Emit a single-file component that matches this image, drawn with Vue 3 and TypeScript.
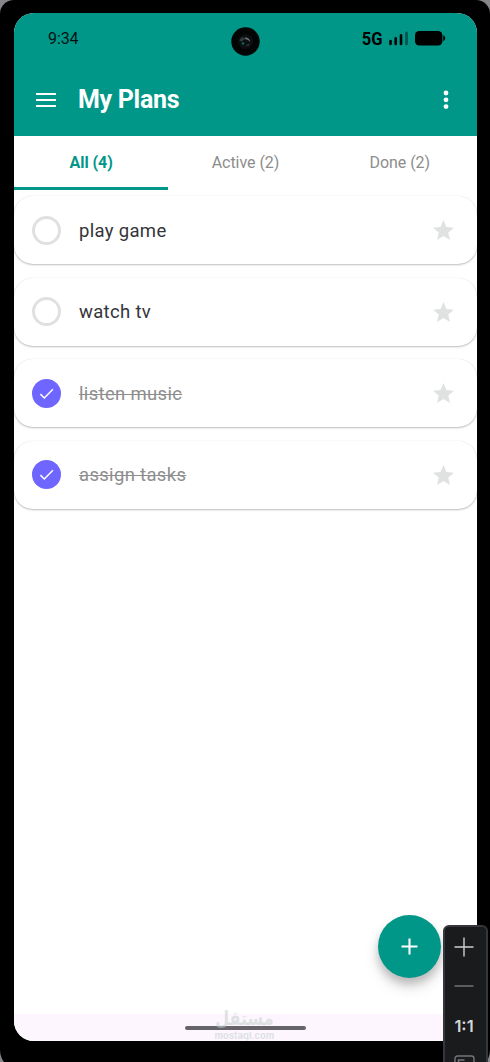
<script setup lang="ts">
interface Plan { title: string; done: boolean }
const plans: Plan[] = [
  { title: 'play game', done: false },
  { title: 'watch tv', done: false },
  { title: 'listen music', done: true },
  { title: 'assign tasks', done: true },
]
const tabs: string[] = ['All (4)', 'Active (2)', 'Done (2)']
</script>

<template>
  <div class="device">
    <div class="frame">
      <main class="screen">
        <header class="top">
          <div class="status">
            <span class="time">9:34</span>
            <div class="signals">
              <span class="net">5G</span>
              <svg class="bars" width="20" height="16" viewBox="0 0 20 16">
                <path d="M1.5 14V11M6.7 14V8.4M12 14V5.2" stroke="#000" stroke-width="2.6" stroke-linecap="round" />
                <path d="M17.5 14V3" stroke="#000" stroke-opacity=".42" stroke-width="2.8" stroke-linecap="round" />
              </svg>
              <svg class="battery" width="31" height="15" viewBox="0 0 31 15">
                <rect x="0" y="0" width="27.4" height="14.5" rx="4.3" />
                <path d="M28.2 4.2q2 .4 2 3t-2 3z" />
              </svg>
            </div>
          </div>
          <div class="bar">
            <svg class="menu" width="20" height="14" viewBox="0 0 20 14"><path d="M0 1h20M0 7h20M0 13h20" stroke="#fff" stroke-width="2" /></svg>
            <h1>My Plans</h1>
            <svg class="more" width="6" height="20" viewBox="0 0 6 20"><circle cx="3" cy="3" r="2.4" /><circle cx="3" cy="9.8" r="2.4" /><circle cx="3" cy="16.6" r="2.4" /></svg>
          </div>
        </header>
        <nav class="tabs">
          <div v-for="(tab, i) in tabs" :key="tab" class="tab" :class="{ active: i === 0 }">{{ tab }}</div>
        </nav>
        <section class="list">
          <article v-for="plan in plans" :key="plan.title" class="card" :class="{ done: plan.done }">
            <span class="check">
              <svg v-if="plan.done" width="29" height="29" viewBox="0 0 29 29"><path d="M8.4 15.1l3.9 3.9 8.6-8.7" fill="none" stroke="#fff" stroke-width="1.5" /></svg>
            </span>
            <span class="title">{{ plan.title }}</span>
            <svg class="star" width="21" height="20" viewBox="2 2 20 19"><path d="M12 17.27 18.18 21l-1.64-7.03L22 9.24l-7.19-.61L12 2 9.19 8.63 2 9.24l5.46 4.73L5.82 21z" /></svg>
          </article>
        </section>
        <footer class="navigation">
          <div class="home"></div>
        </footer>
      </main>
    </div>
    <svg class="camera" width="29" height="29" viewBox="0 0 29 29">
      <circle cx="14.5" cy="14.5" r="14.2" fill="#030505" />
      <circle cx="14.5" cy="14.5" r="7.5" fill="#0b0f10" />
      <path d="M8.5 13.5q.6-3 3.5-3.6l3 2.6q-3-.4-4.2 2.2z" fill="#343b3d" />
      <path d="M14 10.3q4.3.2 5.4 4.8-2-2.6-5-3z" fill="#6f7e81" />
      <path d="M14.5 18.5l4-2-1 2.8z" fill="#303638" />
      <circle cx="12" cy="16.5" r="1.2" fill="#067068" />
    </svg>
    <div class="watermark"><span class="brand" dir="rtl">مستقل</span><span class="site">mostaql.com</span></div>
    <button class="fab" aria-label="Add plan"><svg width="17" height="17" viewBox="0 0 17 17"><path d="M8.5 .5v16M.5 8.5h16" stroke="#fff" stroke-width="2.1" /></svg></button>
    <aside class="zoom">
      <svg class="plus" width="20" height="20" viewBox="0 0 20 20"><path d="M10 .5v19M.5 10h19" /></svg>
      <svg class="minus" width="20" height="2" viewBox="0 0 20 2"><path d="M.5 1h19" /></svg>
      <span class="ratio">1:1</span>
      <svg class="fit" width="21" height="16" viewBox="0 0 21 16"><rect x="1" y="1" width="19" height="18" rx="2.5" /><path d="M4.5 9V5h6" /></svg>
    </aside>
  </div>
</template>

<style>
body { background: #000; overflow: hidden; }
</style>

<style scoped>
.device { position: relative; width: 490px; height: 1062px; overflow: hidden; background: #85858a; font-family: Roboto, "Noto Sans", sans-serif; }
.frame { box-sizing: border-box; height: 1070px; padding: 13px 13px 29px 14px; background: #000; border-radius: 14px 14px 20px 20px; }
.screen { display: flex; flex-direction: column; width: 463px; height: 1028px; overflow: hidden; border-radius: 20px; background: #fff; }
.top { flex: 0 0 122.3px; background: #009788; }
.status { display: flex; justify-content: space-between; align-items: center; height: 50px; padding: 0 31px 0 34px; }
.time { font-size: 16px; letter-spacing: -.1px; color: #031311; }
.signals { display: flex; align-items: center; height: 16px; }
.net { padding-top: 1px; font-size: 18.8px; font-weight: 700; line-height: 16px; transform: scaleX(.88); transform-origin: right; }
.bars { margin-left: 6px; }
.battery { margin-left: 6px; }
.bar { display: flex; align-items: center; height: 73px; padding: 0 28.5px 0 22px; }
h1 { margin: 0 auto 0 22px; font-size: 25px; line-height: 30px; font-weight: 700; letter-spacing: -.3px; color: #fff; }
.more { fill: #fff; }
.tabs { display: grid; grid-template-columns: repeat(3, 1fr); flex: 0 0 53.7px; }
.tab { display: flex; align-items: center; justify-content: center; padding-top: 2.4px; border-bottom: 3.4px solid transparent; color: #8d8d8d; font-size: 16px; letter-spacing: -.05px; }
.active { color: #009788; border-color: #009788; font-weight: 700; }
.list { display: flex; flex-direction: column; gap: 13.5px; padding-top: 6.4px; }
.card { box-sizing: border-box; display: flex; align-items: center; height: 68px; padding: 0 23.4px 0 18px; border-radius: 19px; background: #fff; box-shadow: 0 1px 2px rgba(0,0,0,.25), 0 0 1px rgba(0,0,0,.12); }
.check { box-sizing: border-box; width: 29px; height: 29px; border: 3px solid #dfe1e1; border-radius: 50%; }
.done .check { border: 0; background: #6e66ff; }
.check svg { display: block; }
.title { margin: 0 auto 0 18px; padding-top: 1px; color: #343439; font-size: 18.5px; letter-spacing: .32px; }
.done .title { color: #8e8e8e; text-decoration: line-through; text-decoration-thickness: 1.3px; }
.star { fill: #dfe2e1; }
.navigation { display: flex; align-items: center; justify-content: center; height: 27px; margin-top: auto; background: #fdf6ff; }
.home { width: 121px; height: 4px; border-radius: 2px; background: #67636a; }
.camera { position: absolute; left: 231px; top: 27px; }
.watermark { position: absolute; left: 210px; top: 1012px; display: flex; flex-direction: column; align-items: center; width: 69px; height: 29px; color: rgba(195, 208, 202, .55); }
.brand { height: 18px; font: 700 16px/18px "DejaVu Sans", sans-serif; transform: scaleY(1.2); transform-origin: bottom; }
.site { height: 11px; font: 700 9.4px/11px Inter, sans-serif; }
.fab { position: absolute; left: 378px; top: 915px; display: flex; align-items: center; justify-content: center; width: 63px; height: 63px; padding: 0; border: 0; border-radius: 50%; background: #009788; box-shadow: 0 6px 8px rgba(0,0,0,.18), 0 9px 15px rgba(0,0,0,.13); }
.zoom { position: absolute; left: 443px; top: 925px; box-sizing: border-box; display: flex; flex-direction: column; align-items: center; width: 45px; height: 150px; padding-top: 10px; padding-right: 3px; border: 2px solid #36373d; border-radius: 6px; background: #1a1b1d; }
.zoom svg { flex: none; fill: none; stroke: #ced0d4; stroke-width: 1.4; }
.zoom .minus { margin-top: 28px; stroke: #787a7d; }
.ratio { margin-top: 29px; color: #d4d5d7; font: 600 16.5px/20px Inter, sans-serif; }
.zoom .fit { margin-top: 19px; stroke: #74767a; }
</style>
